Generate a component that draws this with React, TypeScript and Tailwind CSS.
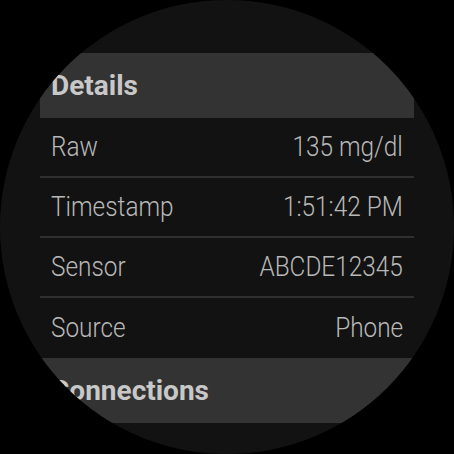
import React from "react";

const rows = [
  ["Raw", "135 mg/dl"],
  ["Timestamp", "1:51:42 PM"],
  ["Sensor", "ABCDE12345"],
  ["Source", "Phone"],
];

export default function App() {
  return (
    <div className="w-[454px] h-[454px] bg-black overflow-hidden" style={{ fontFamily: "Roboto, sans-serif" }}>
      <div className="w-[454px] h-[454px] rounded-full bg-[#121212] overflow-hidden flex flex-col pt-[53px] px-[40px]">
        <div className="h-[65px] shrink-0 bg-[#333333] flex items-center pl-[11px] text-[28px] font-bold text-[#c8c8c8]">
          Details
        </div>
        {rows.map(([k, v], i) => (
          <div key={k} className={"h-[60px] shrink-0 flex items-center justify-between pl-[11px] pr-[11px] text-[28px] font-light text-[#b8b8b8] " + (i < 3 ? "border-b-2 border-[#303030]" : "")}>
            <span className="inline-block origin-left scale-x-[0.87] whitespace-nowrap">{k}</span>
            <span className="inline-block origin-right scale-x-[0.87] whitespace-nowrap">{v}</span>
          </div>
        ))}
        <div className="h-[65px] shrink-0 bg-[#333333] flex items-center pl-[11px] text-[28px] font-bold text-[#c8c8c8]">
          Connections
        </div>
      </div>
    </div>
  );
}
